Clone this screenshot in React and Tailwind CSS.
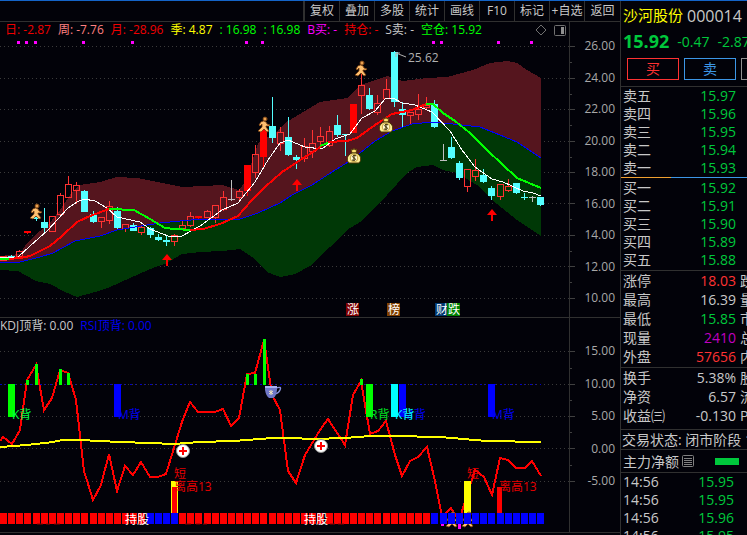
import clsx from "clsx";

const tools = ["复权", "叠加", "多股", "统计", "画线", "F10", "标记", "+自选", "返回"];

const legend = [
  { text: "日: -2.87", color: "text-[#f00000]" },
  { text: "周: -7.76", color: "text-[#ff8080]" },
  { text: "月: -28.96", color: "text-[#f00000]" },
  { text: "季: 4.87", color: "text-[#ffff00]" },
  { text: ": 16.98", color: "text-[#00ff00]" },
  { text: ": 16.98", color: "text-[#00ff00]" },
  { text: "B买: -", color: "text-[#ff00ff]" },
  { text: "持仓: -", color: "text-[#f00000]" },
  { text: "S卖: -", color: "text-[#c8c8c8]" },
  { text: "空仓: 15.92", color: "text-[#00ff00]" },
];

const priceTicks = ["26.00", "24.00", "22.00", "20.00", "18.00", "16.00", "14.00", "12.00", "10.00"];
const indexTicks = ["15.00", "10.00", "5.00", "0.00", "-5.00"];

// [high, top, bottom, low, kind] r: hollow, f: filled red, c: cyan, g: grey doji
const candles = [
  [256, 256, 260, 261, "r"], [255, 256, 258, 258, "c"], [250, 251, 256, 257, "r"], [231, 231, 233, 234, "f"],
  [217, 217, 219, 221, "c"], [208, 222, 228, 234, "c"], [216, 216, 231, 232, "r"], [193, 195, 214, 215, "r"],
  [176, 184, 197, 198, "r"], [182, 185, 190, 204, "r"], [190, 191, 212, 212, "c"], [211, 214, 222, 223, "c"],
  [217, 217, 221, 228, "r"], [201, 206, 220, 224, "r"], [207, 211, 228, 229, "c"], [224, 224, 228, 232, "r"],
  [223, 225, 231, 231, "c"], [226, 227, 232, 235, "r"], [227, 228, 235, 238, "c"], [234, 237, 240, 241, "c"],
  [236, 240, 242, 246, "c"], [234, 235, 241, 246, "r"], [221, 225, 228, 229, "r"], [212, 216, 225, 227, "r"],
  [216, 216, 218, 219, "f"], [210, 211, 217, 218, "r"], [205, 205, 217, 223, "r"], [191, 197, 209, 211, "r"],
  [180, 199, 200, 201, "g"], [189, 191, 197, 201, "r"], [165, 165, 191, 196, "f"], [145, 154, 172, 178, "r"],
  [123, 130, 157, 167, "f"], [97, 126, 138, 143, "c"], [127, 132, 143, 151, "r"], [117, 137, 155, 156, "c"],
  [155, 157, 160, 169, "c"], [138, 146, 158, 162, "r"], [130, 143, 151, 158, "r"], [127, 136, 141, 145, "r"],
  [126, 131, 145, 147, "r"], [115, 125, 135, 137, "c"], [134, 134, 135, 156, "c"], [104, 104, 133, 133, "f"],
  [74, 85, 95, 114, "r"], [88, 95, 109, 110, "c"], [95, 103, 112, 115, "r"], [79, 89, 98, 99, "r"],
  [51, 52, 102, 107, "c"], [102, 109, 115, 127, "c"], [112, 112, 115, 124, "r"], [94, 109, 114, 120, "r"],
  [97, 105, 107, 110, "r"], [100, 104, 127, 128, "c"], [144, 160, 161, 161, "g"], [137, 147, 158, 159, "c"],
  [161, 163, 178, 180, "c"], [169, 169, 186, 192, "r"], [159, 170, 176, 181, "r"], [169, 175, 182, 183, "c"],
  [186, 188, 196, 200, "c"], [184, 184, 196, 200, "r"], [179, 186, 190, 192, "r"], [183, 183, 193, 194, "c"],
  [193, 197, 198, 200, "c"], [196, 197, 198, 202, "g"], [197, 197, 205, 206, "c"],
];

const colX = (i) => Math.round(3 + i * 8.14);

const upperBand =
  "0,256 20,254 27,243 40,231 48,225 60,210 72,192 80,185 100,182 117,177 137,178 157,182 182,187 203,186 222,185 239,190 245,182 252,162 258,143 275,133 285,123 300,114 320,102 347,98 360,85 387,76 403,81 427,78 447,77 473,70 490,63 507,61 517,63 527,70 541,78";
const lowerBand =
  "541,236 517,220 492,200 477,185 457,173 443,170 433,165 417,167 407,173 387,195 360,222 347,230 330,247 310,266 295,274 280,277 267,272 255,259 240,249 222,251 200,252 182,254 167,263 155,267 130,278 110,287 95,292 77,297 65,292 50,284 36,281 18,271 0,270";
const blueLine =
  "0,262 20,262 40,257 53,253 75,241 100,236 117,230 135,227 160,223 180,221 203,219 240,219 258,213 280,203 292,195 312,185 332,172 345,164 355,157 375,141 392,131 412,124 433,122 453,124 480,127 500,135 517,142 541,158";
const blueLineBack = blueLine.split(" ").reverse().join(" ");
const whiteLine =
  "0,258 18,257 30,246 48,230 68,208 77,202 84,199 95,201 107,208 117,217 140,222 150,229 168,236 182,236 200,226 222,210 238,203 255,182 268,160 280,143 288,140 305,147 322,149 335,139 350,134 362,118 375,111 385,99 393,98 402,103 415,105 432,112 450,131 462,150 475,167 492,179 503,182 523,191 533,193 541,196";

const redLines = [
  "9,259 20,258 30,256 50,246 62,236 77,222 90,216 109,209",
  "190,230 203,229 220,224 238,216 252,200 265,187 282,172 305,157 322,146",
  "328,142 347,141 357,138 375,125 392,114 412,110 426,104",
];
const greenLines = [
  "0,259 9,259",
  "109,209 134,210 150,219 165,228 175,229 190,230",
  "320,146 328,143",
  "426,104 433,104 443,113 455,121 470,133 487,150 517,178 541,188",
];

const oscillator =
  "0,441 3,437 12,444 20,430 27,380 36,365 44,410 52,398 60,370 68,373 76,400 84,471 93,500 101,485 109,454 117,491 125,466 133,475 141,462 150,477 158,477 166,474 174,448 182,422 190,402 198,412 215,412 223,409 231,426 239,418 247,374 255,373 264,340 272,395 280,410 288,471 296,483 305,455 320,430 328,419 345,445 353,395 361,381 370,434 378,431 386,421 395,455 402,476 410,461 418,457 427,447 435,481 442,517 451,508 459,521 467,495 475,470 484,477 492,495 500,458 508,460 516,468 525,468 532,461 541,476";
const yellowLine =
  "0,447 27,445 53,442 62,440 80,440 120,442 150,443 173,444 200,442 233,441 273,438 290,438 313,439 345,438 370,436 393,436 440,437 487,441 541,442";

const thinBars = [
  [27, 380], [36, 364], [60, 369], [68, 373], [247, 374], [255, 374], [264, 339], [361, 379],
];
const signalBars = [
  { x: 8, fill: "#00ff00" },
  { x: 114, fill: "#0000ff" },
  { x: 366, fill: "#00ff00" },
  { x: 391, fill: "#00ffff" },
  { x: 399, fill: "#0000ff" },
  { x: 488, fill: "#0000ff" },
];
const signalTexts = [
  { x: 12, y: 419, text: "K背", fill: "#00ff40" },
  { x: 118, y: 419, text: "M背", fill: "#0000f0" },
  { x: 370, y: 419, text: "R背", fill: "#00e020" },
  { x: 403, y: 419, text: "M背", fill: "#0000f0" },
  { x: 395, y: 419, text: "K背", fill: "#00ffff" },
  { x: 492, y: 419, text: "M背", fill: "#0000f0" },
  { x: 174, y: 478, text: "短", fill: "#e60000" },
  { x: 467, y: 478, text: "短", fill: "#e60000" },
  { x: 174, y: 491, text: "离高13", fill: "#e60000" },
  { x: 499, y: 491, text: "离高13", fill: "#e60000" },
];

const badges = [
  { x: 346, text: "涨", fill: "#800000" },
  { x: 387, text: "榜", fill: "#804000" },
  { x: 435, text: "财", fill: "#003870" },
  { x: 447, text: "跌", fill: "#008000" },
];

const sells = [["卖五", "15.97"], ["卖四", "15.96"], ["卖三", "15.95"], ["卖二", "15.94"], ["卖一", "15.93"]];
const buys = [["买一", "15.92"], ["买二", "15.91"], ["买三", "15.90"], ["买四", "15.89"], ["买五", "15.88"]];
const stats = [
  ["涨停", "18.03", "跌停", "text-[#ff3232]"],
  ["最高", "16.39", "量比", "text-[#c8c8c8]"],
  ["最低", "15.85", "市值", "text-[#00c83c]"],
  ["现量", "2410", "总量", "text-[#c000c0]"],
  ["外盘", "57656", "内盘", "text-[#ff3232]"],
];
const finance = [
  ["换手", "5.38%", "股本", "text-[#c8c8c8]"],
  ["净资", "6.57", "流通", "text-[#c8c8c8]"],
  ["收益㈢", "-0.130", "PE", "text-[#c8c8c8]"],
];
const trades = [["14:56", "15.95"], ["14:56", "15.95"], ["14:56", "15.96"], ["14:56", "15.95"]];

const Candle = ({ x, data }) => {
  const [high, top, bottom, low, kind] = data;
  if (kind === "r") {
    return (
      <g stroke="#ff3232" fill="none">
        <path d={`M${x + 0.5} ${high}V${top}M${x + 0.5} ${bottom}V${low}`} />
        <rect x={x - 2.5} y={top + 0.5} width="6" height={Math.max(bottom - top, 1)} />
      </g>
    );
  }
  const color = kind === "c" ? "#54ffff" : kind === "f" ? "#ff0000" : "#c0c0c0";
  return (
    <g fill={color}>
      <rect x={x} y={high} width="1" height={low - high} />
      <rect x={x - 3} y={top} width="7" height={bottom - top} />
    </g>
  );
};

const Runner = ({ x, y }) => (
  <g transform={`translate(${x} ${y})`} strokeLinecap="round" strokeLinejoin="round">
    <path
      d="M0 -4L2 -3L3 -1L6 0L5 1L2 1L2 2L5 6L3 7L0 4L-3 7L-6 6L-2 2L-2 -1L-4 1L-5 0L-3 -3Z"
      fill="#ffc070"
      stroke="#7a4010"
      strokeWidth="0.8"
    />
    <circle cx="1" cy="-6" r="2" fill="#e8a050" stroke="#7a4010" strokeWidth="0.8" />
  </g>
);

const MoneyBag = ({ x, y }) => (
  <g transform={`translate(${x} ${y})`}>
    <path d="M-3 -7L-1 -6L0 -8L1 -6L3 -7L2 -3H-2Z" fill="#ffe070" stroke="#4a3500" strokeWidth="0.8" />
    <path d="M-2 -3C-7 -1 -8 4 -5 7H5C8 4 7 -1 2 -3Z" fill="#ffef98" stroke="#4a3500" strokeWidth="1" />
    <circle cy="2" r="3.8" fill="#fff8d0" stroke="#b88f20" strokeWidth="0.8" />
    <path d="M2 0C0 -2 -3 1 0 2S1 5 -2 4M0 -1V5" fill="none" stroke="#3a2a00" strokeWidth="1" />
  </g>
);

const Arrow = ({ x, y }) => (
  <path d={`M${x} ${y}L${x + 5} ${y + 6}H${x + 1}V${y + 12}H${x - 1}V${y + 6}H${x - 5}Z`} fill="#ff0000" />
);

const Plus = ({ x, y }) => (
  <g transform={`translate(${x} ${y})`}>
    <circle r="6.5" fill="#ffffff" stroke="#909090" />
    <path d="M-4 0H4M0 -4V4" stroke="#ff0000" strokeWidth="2" />
  </g>
);

const GridLines = ({ rows }) => (
  <g>
    {rows.map((y) => (
      <g key={y}>
        <path d={`M0 ${y + 0.5}H569`} stroke="#3a3a3a" strokeDasharray="1 3" />
        <path d={`M569 ${y + 0.5}H575`} stroke="#404040" />
      </g>
    ))}
    {rows.slice(1).map((y, i) => (
      <path key={y} d={`M569 ${Math.round((y + rows[i]) / 2) + 0.5}H572`} stroke="#404040" />
    ))}
  </g>
);

const Axis = ({ labels, className }) => (
  <div
    className={clsx(
      "flex w-[51px] shrink-0 flex-col justify-between border-l border-[#303030] pr-[5px] text-right text-[12px] leading-4 text-[#a8a8a8]",
      className
    )}
  >
    {labels.map((label) => (
      <span key={label}>{label}</span>
    ))}
  </div>
);

const PriceChart = () => (
  <svg viewBox="0 38 569 279" className="block h-auto w-full overflow-visible" role="img" aria-label="日K线">
    <GridLines rows={[46, 78, 109, 141, 172, 203, 235, 266, 298]} />
    <polygon points={`${upperBand} ${blueLineBack}`} fill="#55151e" shapeRendering="crispEdges" />
    <polygon points={`${blueLine} ${lowerBand}`} fill="#003806" shapeRendering="crispEdges" />
    {[18, 26, 35, 83, 132, 246, 262, 433, 441, 498, 531].map((x) => (
      <rect key={x} x={x - 1} y="41" width="3" height="3" fill="#ff00ff" />
    ))}
    {candles.map((c, i) => (
      <Candle key={i} x={colX(i)} data={c} />
    ))}
    <g fill="none" shapeRendering="crispEdges">
      <polyline points={blueLine} stroke="#0000ff" />
      <polyline points={whiteLine} stroke="#ffffff" />
      {redLines.map((p) => (
        <polyline key={p} points={p} stroke="#ff0000" strokeWidth="2" />
      ))}
      {greenLines.map((p) => (
        <polyline key={p} points={p} stroke="#00ff00" strokeWidth="2" />
      ))}
    </g>
    <Arrow x={167} y={254} />
    <Arrow x={297} y={179} />
    <Arrow x={492} y={209} />
    <Runner x={36} y={212} />
    <Runner x={264} y={125} />
    <Runner x={361} y={69} />
    <MoneyBag x={354} y={156} />
    <MoneyBag x={386} y={125} />
    <path d="M396 53L406 57M396 53V57M396 53H400" stroke="#b0b0b0" fill="none" />
    <text x="408" y="62" fontSize="12" fill="#b0b0b0">25.62</text>
    {badges.map((b) => (
      <g key={b.x}>
        <rect x={b.x} y="303" width="13" height="13" fill={b.fill} />
        <text x={b.x + 1} y="314" fontSize="12" fill="#ffffff">{b.text}</text>
      </g>
    ))}
  </svg>
);

const IndexChart = () => (
  <svg viewBox="0 333 569 199" className="block h-auto w-full overflow-visible" role="img" aria-label="背离指标">
    <GridLines rows={[351, 384, 416, 448, 481]} />
    <path d="M0 384.5H541" stroke="#0000c8" strokeDasharray="2 3 1 4" />
    <polyline points={oscillator} fill="none" stroke="#ff0000" strokeWidth="2" shapeRendering="crispEdges" />
    <polyline points={yellowLine} fill="none" stroke="#ffff00" strokeWidth="2" shapeRendering="crispEdges" />
    {thinBars.map(([x, y]) => (
      <rect key={x} x={x - 1} y={y} width="3" height={385 - y} fill="#00ff00" />
    ))}
    {signalBars.map((b) => (
      <rect key={b.x} x={b.x} y="384" width="7" height="33" fill={b.fill} />
    ))}
    <rect x="171" y="481" width="7" height="32" fill="#ffff00" />
    <rect x="172" y="487" width="5" height="26" fill="#ff0000" />
    <rect x="464" y="481" width="7" height="32" fill="#ffff00" />
    <rect x="497" y="487" width="5" height="26" fill="#ff0000" />
    {signalTexts.map((t) => (
      <text key={`${t.x}-${t.y}`} x={t.x} y={t.y} fontSize="12" fill={t.fill}>{t.text}</text>
    ))}
    <Runner x={452} y={520} />
    <Runner x={468} y={520} />
    {candles.map((_, i) => (
      <rect
        key={i}
        x={colX(i) - 3}
        y="513"
        width="7"
        height="11"
        fill={(i > 17 && i < 22) || i > 52 ? "#0000ff" : "#ff0000"}
      />
    ))}
    <path d="M37 524H43M46 524H50M54 524H60M185 524H191M196 524H200M203 524H207M330 524H335M338 524H344" stroke="#900000" />
    <rect x="441" y="524" width="3" height="2" fill="#ff00ff" />
    <rect x="458" y="524" width="3" height="5" fill="#ff00ff" />
    <text x="125" y="524" fontSize="12" fill="#ffffff">持股</text>
    <text x="304" y="524" fontSize="12" fill="#ffffff">持股</text>
    <Plus x={183} y={451} />
    <Plus x={321} y={446} />
    <g transform="translate(265 386)">
      <path d="M11 2Q17 0 15 4Q14 7 10 8" fill="none" stroke="#8890d8" strokeWidth="1.4" />
      <path d="M0 0H12V4Q11 11 8 12H4Q1 10 0 4Z" fill="#7078c8" />
      <path d="M0 0H12V2H0Z" fill="#a8b0f0" />
      <path d="M6 4V9M4 5L8 8M4 8L8 5" stroke="#fff0c0" strokeWidth="0.9" />
    </g>
  </svg>
);

const QuoteRows = ({ rows }) => (
  <table className="w-full table-fixed text-[14px] leading-[18px]">
    <tbody>
      {rows.map(([label, price], i) => (
        <tr key={i}>
          <th scope="row" className="h-[18px] p-0 pl-[2px] text-left font-normal">{label}</th>
          <td className="p-0 pr-[11px] text-right text-[#00c83c]">{price}</td>
        </tr>
      ))}
    </tbody>
  </table>
);

const StatRows = ({ rows }) => (
  <table className="w-full table-fixed text-[14px] leading-[19px]">
    <tbody>
      {rows.map(([label, value, next, color]) => (
        <tr key={label}>
          <th scope="row" className="h-[19px] w-12 whitespace-nowrap p-0 pl-[2px] text-left font-normal">{label}</th>
          <td className={clsx("p-0 text-right", color)}>{value}</td>
          <th scope="row" className="w-[11px] whitespace-nowrap p-0 pl-1 text-left font-normal">{next}</th>
        </tr>
      ))}
    </tbody>
  </table>
);

export default function App() {
  return (
    <div className="flex w-full overflow-hidden border-t border-[#1464c8] bg-[#020209] font-['Open_Sans','Noto_Sans_CJK_SC',sans-serif] text-[#c8c8c8]">
      <main className="min-w-0 flex-1">
        <nav className="flex h-[21px] justify-end border-b border-[#303030]">
          <div className="flex border-l-2 border-[#303030]">
            {tools.map((tool) => (
              <button
                key={tool}
                type="button"
                className="w-[35px] whitespace-nowrap border-r border-[#303030] text-[12px] leading-5 last:border-r-0"
              >
                {tool}
              </button>
            ))}
          </div>
        </nav>

        {/* Candles */}
        <section className="flex border-b border-[#303030]">
          <div className="min-w-0 flex-1">
            <div className="flex h-4 items-center gap-[7px] whitespace-nowrap pl-[5px] pr-[3px] text-[12px] leading-4">
              {legend.map((item, i) => (
                <span key={i} className={item.color}>{item.text}</span>
              ))}
              <svg className="ml-auto h-3 w-8 shrink-0" viewBox="0 0 32 12" fill="none" stroke="#707070">
                <path d="M7 1L12 6L7 11L2 6Z" />
                <rect x="20.5" y="1.5" width="11" height="10" rx="1" />
                <rect x="27" y="3" width="3" height="7" fill="#909090" stroke="none" />
              </svg>
            </div>
            <PriceChart />
          </div>
          <Axis labels={priceTicks} className="pb-[11px] pt-4" />
        </section>

        {/* Divergence indicator */}
        <section className="flex border-b border-[#303030]">
          <div className="min-w-0 flex-1">
            <div className="flex h-[15px] gap-[7px] whitespace-nowrap text-[12px] leading-[15px]">
              <span>KDJ顶背: 0.00</span>
              <span className="text-[#0000f0]">RSI顶背: 0.00</span>
            </div>
            <IndexChart />
          </div>
          <Axis labels={indexTicks} className="pb-[43px] pt-[25px]" />
        </section>
      </main>

      <aside className="h-[534px] w-[127px] shrink-0 overflow-hidden border-l border-[#303030]">
        <div className="flex h-[29px] items-center gap-1 whitespace-nowrap pl-[2px]">
          <h1 className="text-[15px] text-[#ffff00]">沙河股份</h1>
          <span className="text-[16px]">000014</span>
        </div>
        <div className="flex h-[22px] items-center gap-2 whitespace-nowrap pl-[2px] text-[14px] text-[#00c83c]">
          <strong className="text-[18px]">15.92</strong>
          <span>-0.47</span>
          <span>-2.87%</span>
        </div>
        <div className="flex h-[35px] items-center gap-[5px] border-b border-[#303030] pl-[6px] text-[14px] leading-5">
          <button type="button" className="h-[22px] w-[52px] shrink-0 border border-[#ff3232] text-[#ff3232]">买</button>
          <button type="button" className="h-[22px] w-[52px] shrink-0 border border-[#3c96e6] text-[#3c96e6]">卖</button>
          <button type="button" aria-label="更多" className="h-[22px] w-[52px] shrink-0 border border-[#909090]" />
        </div>
        <QuoteRows rows={sells} />
        <div className="flex h-px">
          <div className="w-[50px] bg-[#f0a030]" />
          <div className="flex-1 bg-[#3c96e6]" />
        </div>
        <div className="border-b border-[#303030] pb-px pt-px">
          <QuoteRows rows={buys} />
        </div>
        <div className="border-b border-[#303030] pb-px">
          <StatRows rows={stats} />
        </div>
        <div className="border-b border-[#303030] pb-1">
          <StatRows rows={finance} />
        </div>
        <p className="h-5 whitespace-nowrap border-b border-[#303030] pl-px text-[14px] leading-[19px]">
          交易状态: 闭市阶段 15:00
        </p>
        <div className="flex h-[23px] items-center border-b border-[#303030] pl-[2px] text-[14px]">
          <span className="whitespace-nowrap">主力净额</span>
          <svg className="ml-[3px] h-3 w-3 shrink-0" viewBox="0 0 12 12" fill="none" stroke="#808080">
            <rect x="0.5" y="0.5" width="11" height="11" rx="1" />
            <path d="M2 3.5H10M2 5.5H10M2 7.5H10M2 9.5H10" />
          </svg>
          <div className="ml-[21px] h-[7px] w-6 shrink-0 bg-[#00c83c]" />
        </div>
        <div className="pr-[2px]">
          <QuoteRows rows={trades} />
        </div>
      </aside>
    </div>
  );
}
